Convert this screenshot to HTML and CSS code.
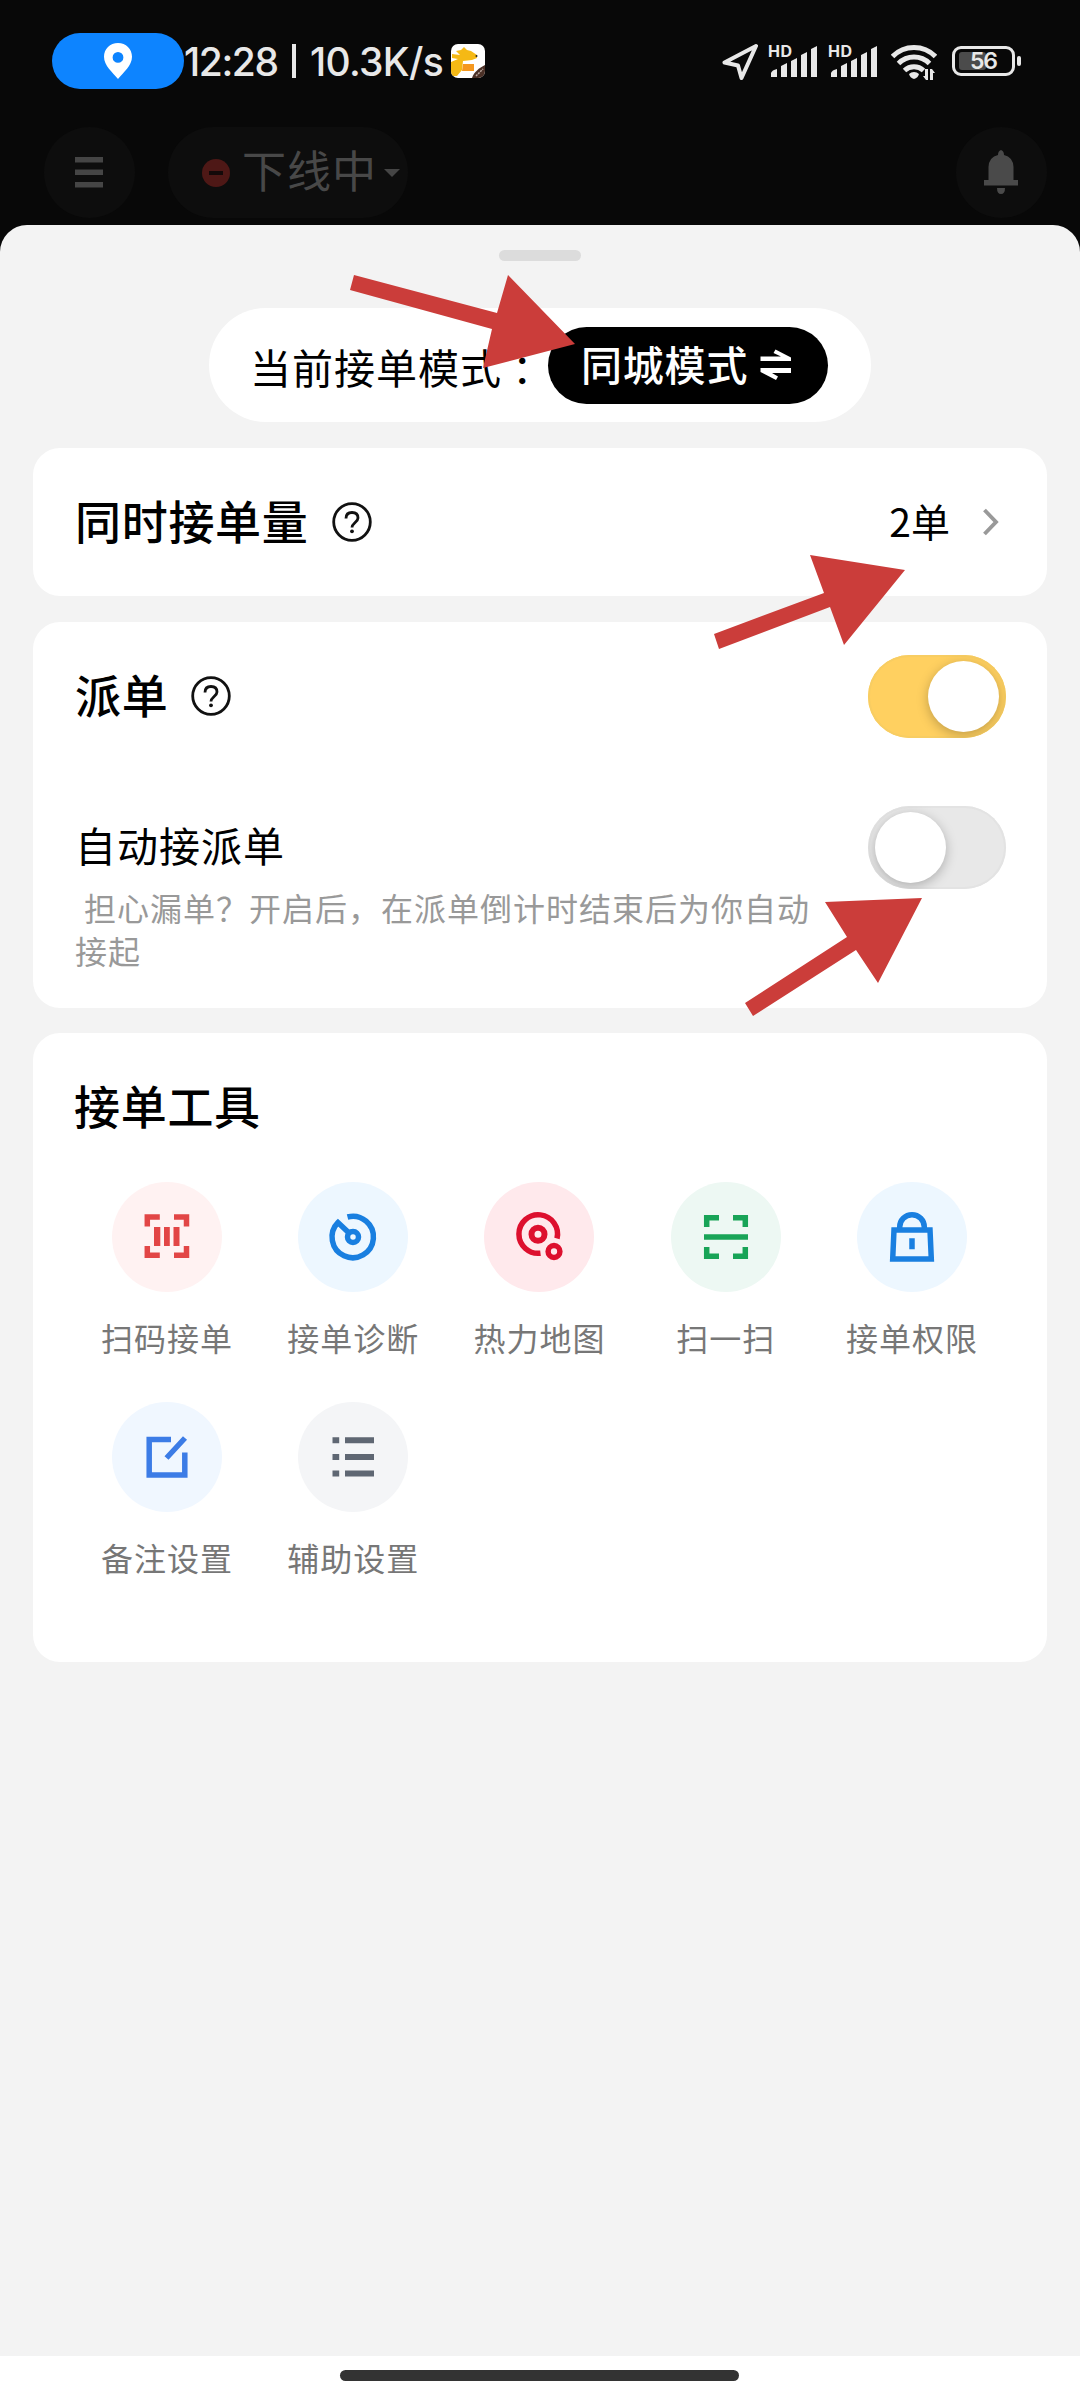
FILE: index.html
```html
<!DOCTYPE html>
<html lang="zh-CN">
<head>
<meta charset="utf-8">
<title>接单设置</title>
<link rel="stylesheet" href="styles.css">
</head>
<body>
<div class="screen">
  <div class="status">
    <div class="location-pill">
      <svg width="28" height="36" viewBox="0 0 28 36"><path fill="#fff" fill-rule="evenodd" d="M14 0C6 0 0 6 0 13.700c0 9 8.500 15.300 14 22.300 5.500-7 14-13.300 14-22.300C28 6 22 0 14 0zm0 9a5.400 5.400 0 1 1 0 10.800A5.400 5.400 0 0 1 14 9z"/></svg>
    </div>
    <div class="clock"><span class="time">12:28</span><i class="divider"></i><span class="speed">10.3K/s</span></div>
    <svg class="app" width="34" height="34" viewBox="0 0 34 34">
      <defs><clipPath id="app-clip"><rect width="34" height="34" rx="7"/></clipPath></defs>
      <g clip-path="url(#app-clip)">
        <rect width="34" height="34" fill="#fff"/>
        <path fill="#f5b915" d="M5 7l5-1 3-3 3 3 4 1 6 4 0 3-5 2-9 1-1 9-5 6H0V18l7-3-6-1V10l8 1z"/>
        <path fill="#f5981f" d="M12 20h11v7H11z"/>
        <path fill="#4b3026" d="M21 34c2-6 7-10 13-13v13z"/>
        <path stroke="#b9a79f" stroke-width="1.500" stroke-dasharray="2 1" d="M25 32l7-7"/>
        <circle cx="25.500" cy="12" r="1" fill="#222"/>
      </g>
    </svg>
    <div class="status-icons">
      <svg width="36" height="36" viewBox="0 0 36 36"><path fill="none" stroke="#e8e8e8" stroke-width="4" stroke-linejoin="round" d="M34 2L2.500 18.500 16 21.500 19.500 34z"/></svg>
      <svg class="signal" width="51" height="34" viewBox="0 0 51 34"><text class="hd" x="0" y="13" textLength="24">HD</text><path fill="#e8e8e8" d="M3 33v-4q1-3 6-4v8zM13 33V22l6-3v14zM23 33V17l6-3v19zM33 33V11l6-3v25zM43 33V5l6-3v31z"/></svg>
      <svg class="signal" width="51" height="34" viewBox="0 0 51 34"><text class="hd" x="0" y="13" textLength="24">HD</text><path fill="#e8e8e8" d="M3 33v-4q1-3 6-4v8zM13 33V22l6-3v14zM23 33V17l6-3v19zM33 33V11l6-3v25zM43 33V5l6-3v31z"/></svg>
      <svg class="wifi" width="46" height="36" viewBox="0 0 46 36"><g fill="none" stroke="#e8e8e8" stroke-width="5"><path d="M1.500 12.500a30 30 0 0 1 43 0"/><path d="M7.500 19.500a22 22 0 0 1 31 0"/><path d="M13.500 26.500a14 14 0 0 1 19 0"/></g><path fill="#e8e8e8" d="M18 30a7 7 0 0 1 10 0q-1 4-5 5-4-1-5-5zM34 25h3v11h-2l-3-4h2zM39 36V25h2l3 4h-2v7z"/></svg>
      <div class="battery"><i class="charge"></i><span class="percent">56</span></div><i class="battery-tip"></i>
    </div>
  </div>

  <div class="header">
    <div class="round"><svg width="28" height="31" viewBox="0 0 28 31"><path fill="#454545" d="M0 0h28v5.500H0zM0 12.500h28V18H0zM0 25h28v5.500H0z"/></svg></div>
    <div class="offline">
      <svg width="28" height="28" viewBox="0 0 28 28"><circle cx="14" cy="14" r="14" fill="#4e1816"/><path fill="#130909" d="M7 12h14v4H7z"/></svg>
      <span class="offline-text">下线中</span>
      <svg width="16" height="8" viewBox="0 0 16 8"><path fill="#454545" d="M0 0h16L8 8z"/></svg>
    </div>
    <div class="round bell"><svg width="34" height="45" viewBox="0 0 34 45"><path fill="#4a4a4a" d="M14 5q0-4 3-5 3 1 3 5 9 2 9.500 12v13H34v5.500H0V30h4.500V17Q5 7 14 5zM13 38h8q0 6-4 6t-4-6z"/></svg></div>
  </div>

  <div class="sheet">
    <div class="handle"></div>
    <div class="mode">
      <span class="mode-label">当前接单模式<span class="colon">：</span></span>
      <div class="mode-button"><span class="mode-text">同城模式</span>
        <svg width="32" height="32" viewBox="0 0 32 32"><path fill="#fff" d="M.5 7.500H21L13.500 4l2-3.500L31 8.500V12H.5zM31 19v5H12l6 3.500-2 3.500L.5 23v-4z"/></svg>
      </div>
    </div>

    <div class="card count">
      <span class="title">同时接单量</span>
      <svg class="help" width="40" height="40" viewBox="0 0 40 40"><circle cx="20" cy="20" r="18.300" fill="none" stroke="#111" stroke-width="2.800"/><path fill="none" stroke="#111" stroke-width="2.800" d="M14 16.500q0-6 6-6t6 5.500c0 4-6 5-6 9.500"/><circle cx="20" cy="29.300" r="1.900" fill="#111"/></svg>
      <span class="amount">2单</span>
      <svg class="chevron" width="16" height="28" viewBox="0 0 16 28"><path fill="none" stroke="#999" stroke-width="3.900" d="M1.500 2L13 14 1.500 26"/></svg>
    </div>

    <div class="card dispatch">
      <div class="dispatch-head">
        <span class="title">派单</span>
        <svg class="help" width="40" height="40" viewBox="0 0 40 40"><circle cx="20" cy="20" r="18.300" fill="none" stroke="#111" stroke-width="2.800"/><path fill="none" stroke="#111" stroke-width="2.800" d="M14 16.500q0-6 6-6t6 5.500c0 4-6 5-6 9.500"/><circle cx="20" cy="29.300" r="1.900" fill="#111"/></svg>
        <div class="toggle on"><i class="knob"></i></div>
      </div>
      <div class="auto">
        <div class="auto-copy">
          <div class="auto-title">自动接派单</div>
          <div class="auto-desc">担心漏单？开启后，在派单倒计时结束后为你自动接起</div>
        </div>
        <div class="toggle"><i class="knob"></i></div>
      </div>
    </div>

    <div class="card tools">
      <div class="title">接单工具</div>
      <div class="grid">
        <div class="tool"><svg class="disc rose" viewBox="0 0 110 110"><path fill="none" stroke="#e24646" stroke-width="5.500" d="M35.300 44.500V35h12.500M62 35h12.500v9.500M74.500 64v9.300H62M47.800 73.300H35.300V64"/><path fill="#e24646" d="M42 45h6.300v19H42zM52 45h5.800v19H52zM61.500 45h6v19h-6z"/></svg><span class="label">扫码接单</span></div>
        <div class="tool"><svg class="disc sky" viewBox="0 0 110 110"><g fill="none" stroke="#197fe0" stroke-width="5.500"><path d="M49.500 35A20.700 20.700 0 1 1 40 40.500L50 50"/><circle cx="55" cy="55" r="5.500"/></g></svg><span class="label">接单诊断</span></div>
        <div class="tool"><svg class="disc pink" viewBox="0 0 110 110"><g fill="none" stroke="#dd102e" stroke-width="5.500"><path d="M56.500 71.200A19.300 19.300 0 1 1 73 56.500"/><circle cx="54" cy="52.300" r="6.500" stroke-width="6"/><circle cx="70" cy="69.500" r="5.900"/></g></svg><span class="label">热力地图</span></div>
        <div class="tool"><svg class="disc mint" viewBox="0 0 110 110"><path fill="none" stroke="#18a457" stroke-width="5.500" d="M35.700 45v-9.300H48M62 35.700h12.300V45M74.300 65v9.300H62M48 74.300H35.700V65M33 55h44"/></svg><span class="label">扫一扫</span></div>
        <div class="tool"><svg class="disc sky" viewBox="0 0 110 110"><g fill="none" stroke="#197fe0" stroke-width="5.500"><path d="M37 48h36l1.300 29H35.700zM42.700 47v-2a12.300 12.300 0 0 1 24.600 0v2M55 56.300v11"/></g></svg><span class="label">接单权限</span></div>
        <div class="tool"><svg class="disc ice" viewBox="0 0 110 110"><path fill="none" stroke="#3c7ce6" stroke-width="5.500" d="M59 37.400H37.200V73h35.600V50.500M54.500 56L73 36"/></svg><span class="label">备注设置</span></div>
        <div class="tool"><svg class="disc fog" viewBox="0 0 110 110"><path fill="#5f6773" d="M34.500 35.300h6.700v6h-6.700zM47 35.300h29v6H47zM34.500 52h6.700v6h-6.700zM47 52h29v6H47zM34.500 68.500h6.700v6h-6.700zM47 68.500h29v6H47z"/></svg><span class="label">辅助设置</span></div>
      </div>
    </div>
  </div>
  <div class="nav"><i class="home"></i></div>

  <svg class="pointers" width="1080" height="2400" viewBox="0 0 1080 2400"><g fill="#cb3d3a">
    <path d="M354 275L497 313 508 275 575 344 483 368 492 329 350 290z"/>
    <path d="M714 634L824 593 810 555 905 570 844 645 830 607 719 649z"/>
    <path d="M745 1003L847 937 825 902 922 898 878 983 856 950 753 1016z"/>
  </g></svg>
</div>
</body>
</html>
```
FILE: styles.css
```css
* { box-sizing: border-box; }
body { margin: 0; background: #080808; font-family: "Noto Sans CJK SC", sans-serif; color: #000; }
svg { display: block; flex: none; }
i { display: block; flex: none; }
.screen { position: relative; width: 1080px; height: 2400px; display: flex; flex-direction: column; overflow: hidden; background: #080808; }

.status { height: 127px; padding: 33px 59px 0 52px; display: flex; align-items: flex-start; }
.location-pill { width: 132px; height: 56px; border-radius: 28px; background: #0d84ff; display: flex; justify-content: center; padding-top: 10px; }
.clock { display: flex; align-items: center; height: 56px; color: #e8e8e8; font: 500 39px/57px "Inter", sans-serif; white-space: nowrap; }
.time { width: 108px; letter-spacing: -1.4px; }
.divider { width: 4px; height: 34px; background: #e8e8e8; }
.speed { width: 155px; padding-left: 14px; letter-spacing: -0.7px; }
.app { margin-top: 11px; }
.status-icons { margin-left: auto; display: flex; align-items: flex-start; padding-top: 11px; }
.signal { margin-left: 9px; overflow: visible; }
.status-icons .signal:nth-child(2) { margin-left: 10px; }
.hd { font: 700 16px "Inter", sans-serif; fill: #e8e8e8; }
.wifi { margin-left: 12px; }
.battery { position: relative; width: 63px; height: 30px; margin: 2px 0 0 15px; border: 3px solid #e8e8e8; border-radius: 9px; display: flex; justify-content: center; }
.charge { position: absolute; left: 4px; top: 3px; width: 27px; height: 18px; border-radius: 3px; background: #4b4b4b; }
.percent { position: relative; font: 600 23px/25px "Inter", sans-serif; color: #e8e8e8; letter-spacing: -1px; }
.battery-tip { width: 4px; height: 10px; margin: 12px 0 0 2px; border-radius: 2px; background: #e8e8e8; }

.header { height: 98px; padding: 0 33px 7px 44px; display: flex; }
.round { width: 91px; height: 91px; border-radius: 50%; background: #0d0d0d; display: flex; align-items: center; justify-content: center; padding-right: 2px; }
.offline { width: 240px; height: 91px; margin-left: 33px; padding-left: 34px; border-radius: 46px; background: #0d0d0d; display: flex; align-items: center; }
.offline-text { margin: -7px 0 0 12px; width: 142px; font-size: 44px; letter-spacing: 1px; line-height: 60px; color: #484848; }
.bell { margin-left: auto; }

.sheet { height: 2131px; padding: 25px 33px 0; border-radius: 27px 27px 0 0; background: #f3f3f3; display: flex; flex-direction: column; }
.handle { width: 82px; height: 11px; border-radius: 6px; background: #dcdcdc; align-self: center; }
.mode { width: 662px; height: 114px; margin: 47px 0 26px; align-self: center; border-radius: 57px; background: #fff; display: flex; align-items: center; padding-left: 41px; }
.mode-label { width: 298px; font-size: 41px; letter-spacing: 1px; line-height: 60px; margin-top: 1px; white-space: nowrap; }
.colon { margin-left: 10px; }
.mode-button { width: 280px; height: 77px; border-radius: 39px; background: #000; color: #fff; display: flex; align-items: center; padding-left: 33px; }
.mode-text { width: 179px; font-size: 41px; font-weight: 500; letter-spacing: 0.8px; line-height: 60px; margin-top: -4px; }
.card { border-radius: 27px; background: #fff; }
.title { font-size: 46px; font-weight: 500; letter-spacing: 0.7px; line-height: 66px; margin-top: -6px; }
.count { height: 148px; margin-bottom: 26px; padding: 0 48px 0 42px; display: flex; align-items: center; }
.help { margin-left: 23px; }
.amount { margin: -4px 0 0 auto; font-size: 39px; line-height: 60px; }
.chevron { margin-left: 33px; }
.dispatch { height: 386px; margin-bottom: 25px; padding: 0 41px 0 42px; }
.dispatch-head { height: 148px; display: flex; align-items: center; }
.toggle { width: 138px; height: 83px; margin-left: auto; padding: 6px 7px; border-radius: 42px; background: #e8e8e8; display: flex; flex: none; overflow: hidden; box-shadow: inset 0 0 0 2px #e3e3e3; }
.toggle.on { background: #ffd060; justify-content: flex-end; box-shadow: inset 0 0 0 2px #f8cd62; }
.knob { width: 71px; height: 71px; border-radius: 50%; background: #fff; box-shadow: 0 3px 12px rgba(0, 0, 0, .25); }
.auto { display: flex; align-items: flex-start; padding-top: 36px; }
.auto-copy { padding-top: 8px; width: 740px; }
.auto-title { font-size: 41px; letter-spacing: 1px; line-height: 60px; }
.auto-desc { margin-top: 12px; font-size: 32px; letter-spacing: 1px; line-height: 43px; text-indent: 9px; color: #999; }
.tools { height: 629px; padding: 38px 41px 0; }
.tools .title { margin: 0; }
.grid { display: grid; grid-template-columns: repeat(5, 1fr); grid-auto-rows: 220px; margin: 45px 1px 0 0; }
.tool { display: flex; flex-direction: column; align-items: center; }
.disc { width: 110px; height: 110px; border-radius: 50%; }
.label { margin-top: 21px; font-size: 32px; letter-spacing: 1px; line-height: 48px; color: #777; }
.rose { background: #fff2f2; }
.sky { background: #edf7ff; }
.pink { background: #ffe9ec; }
.mint { background: #edf8f3; }
.ice { background: #f0f7ff; }
.fog { background: #f4f5f7; }

.nav { height: 44px; background: #fff; display: flex; justify-content: center; padding: 14px 1px 0 0; }
.home { width: 399px; height: 11px; border-radius: 6px; background: #333; }
.pointers { position: absolute; left: 0; top: 0; }
```
